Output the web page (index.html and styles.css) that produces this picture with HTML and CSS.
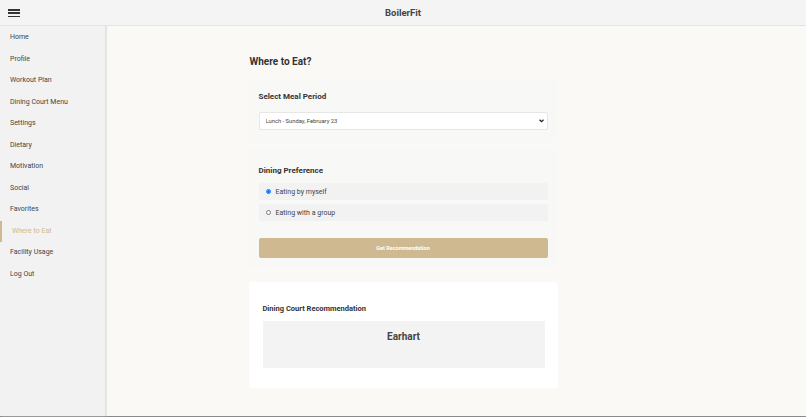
FILE: index.html
```html
<!DOCTYPE html>
<html lang="en">
<head>
    <meta charset="UTF-8">
    <meta name="viewport" content="width=device-width, initial-scale=1.0">
    <title>BoilerFit - Where to Eat</title>
    <link rel="stylesheet" href="styles.css">
</head>
<body>
    <div class="header">
        <button class="menu-btn" aria-label="Menu">
            <span></span><span></span><span></span>
        </button>
        <h1>BoilerFit</h1>
    </div>
    <div class="sidebar">
        <a href="#">Home</a>
        <a href="#">Profile</a>
        <a href="#">Workout Plan</a>
        <a href="#">Dining Court Menu</a>
        <a href="#">Settings</a>
        <a href="#">Dietary</a>
        <a href="#">Motivation</a>
        <a href="#">Social</a>
        <a href="#">Favorites</a>
        <a href="#" class="active">Where to Eat</a>
        <a href="#">Facility Usage</a>
        <a href="#">Log Out</a>
    </div>
    <div class="main">
        <div class="content">
            <h2 class="page-title">Where to Eat?</h2>
            <div class="card meal-card">
                <h3>Select Meal Period</h3>
                <div class="select-wrap">
                    <select class="meal-select">
                        <option>Lunch - Sunday, February 23</option>
                        <option>Dinner - Sunday, February 23</option>
                    </select>
                    <svg class="chevron" width="5" height="4" viewBox="0 0 10 8">
                        <path d="M1 1.5 L5 5.5 L9 1.5" fill="none" stroke="#222" stroke-width="2.4"/>
                    </svg>
                </div>
            </div>
            <div class="card pref-card">
                <h3>Dining Preference</h3>
                <label class="option">
                    <input type="radio" name="pref" checked>
                    <span>Eating by myself</span>
                </label>
                <label class="option">
                    <input type="radio" name="pref">
                    <span>Eating with a group</span>
                </label>
                <button class="rec-btn">Get Recommendation</button>
            </div>
            <div class="card result-card">
                <h4>Dining Court Recommendation</h4>
                <div class="result">Earhart</div>
            </div>
        </div>
    </div>
</body>
</html>
```

FILE: styles.css
```css
* {
    margin: 0;
    padding: 0;
    box-sizing: border-box;
}
body {
    font-family: Roboto, 'Liberation Sans', sans-serif;
    background: #faf9f5;
    color: #333;
    height: 417px;
    overflow: hidden;
    border-bottom: 1px solid #8a8a8a;
}
.header {
    height: 26px;
    background: #f4f4f4;
    border-bottom: 1px solid #e4e4e4;
    display: flex;
    align-items: center;
    justify-content: center;
    position: relative;
}
.header h1 {
    font-size: 9.5px;
    font-weight: 700;
    color: #444;
}
.menu-btn {
    position: absolute;
    left: 8px;
    top: 8px;
    width: 12px;
    height: 10px;
    border: none;
    background: none;
    display: flex;
    flex-direction: column;
    justify-content: space-between;
    padding: 1px 0;
    cursor: pointer;
}
.menu-btn span {
    display: block;
    height: 1.5px;
    background: #333;
}
.sidebar {
    position: absolute;
    left: 0;
    top: 26px;
    bottom: 1px;
    width: 105px;
    background: #f2f2f2;
    box-shadow: 1px 0 0 #e2e2e2, 2px 0 1px #e8e8e8;
    display: flex;
    flex-direction: column;
}
.sidebar a {
    display: block;
    padding: 6px 10px;
    line-height: 9.5px;
    font-size: 7px;
    color: #444;
    text-decoration: none;
}
.sidebar a:first-child {
    margin-top: 1px;
}
.sidebar a.active {
    border-left: 2px solid #cfb991;
    color: #cfb991;
}
.main {
    padding-top: 30px;
}
.content {
    width: 309px;
    margin: 0 auto;
}
.page-title {
    font-size: 10px;
    font-weight: 700;
    color: #333;
    margin-bottom: 13px;
    padding-left: 1px;
}
.card {
    background: #f8f8f7;
    border-radius: 3px;
    padding: 12px 10px 13px;
}
.card h3 {
    font-size: 8px;
    font-weight: 700;
    color: #333;
    margin-bottom: 11px;
}
.meal-card {
    margin-bottom: 5px;
}
.select-wrap {
    position: relative;
}
.meal-select {
    display: block;
    width: 100%;
    height: 18px;
    font-family: Roboto, 'Liberation Sans', sans-serif;
    font-size: 5.8px;
    color: #444;
    background: #fff;
    border: 1px solid #e6e6e6;
    border-radius: 2px;
    padding: 0 6px;
    appearance: none;
    -webkit-appearance: none;
}
.chevron {
    position: absolute;
    right: 4px;
    top: 7px;
    pointer-events: none;
}
.pref-card {
    padding-top: 18px;
    padding-bottom: 10px;
    margin-bottom: 14px;
}
.pref-card h3 {
    margin-bottom: 8px;
}
.option {
    display: flex;
    align-items: center;
    height: 17px;
    background: #f2f2f2;
    border-radius: 2px;
    padding-left: 7px;
    margin-bottom: 4px;
    font-size: 7px;
    color: #444;
    cursor: pointer;
}
.option input {
    width: 5px;
    height: 5px;
    margin: 0 5px 0 0;
}
.rec-btn {
    display: block;
    width: 100%;
    height: 20px;
    margin-top: 17px;
    border: none;
    border-radius: 2px;
    background: #cfb991;
    color: #fff;
    font-family: Roboto, 'Liberation Sans', sans-serif;
    font-size: 5.5px;
    font-weight: 700;
    cursor: pointer;
}
.result-card {
    background: #fff;
    padding: 22px 13px 20px 14px;
}
.result-card h4 {
    font-size: 7.5px;
    font-weight: 700;
    color: #333;
    margin-bottom: 8px;
}
.result {
    background: #f3f3f3;
    height: 47px;
    padding-top: 10px;
    text-align: center;
    font-size: 10px;
    font-weight: 700;
    color: #444;
}
```
